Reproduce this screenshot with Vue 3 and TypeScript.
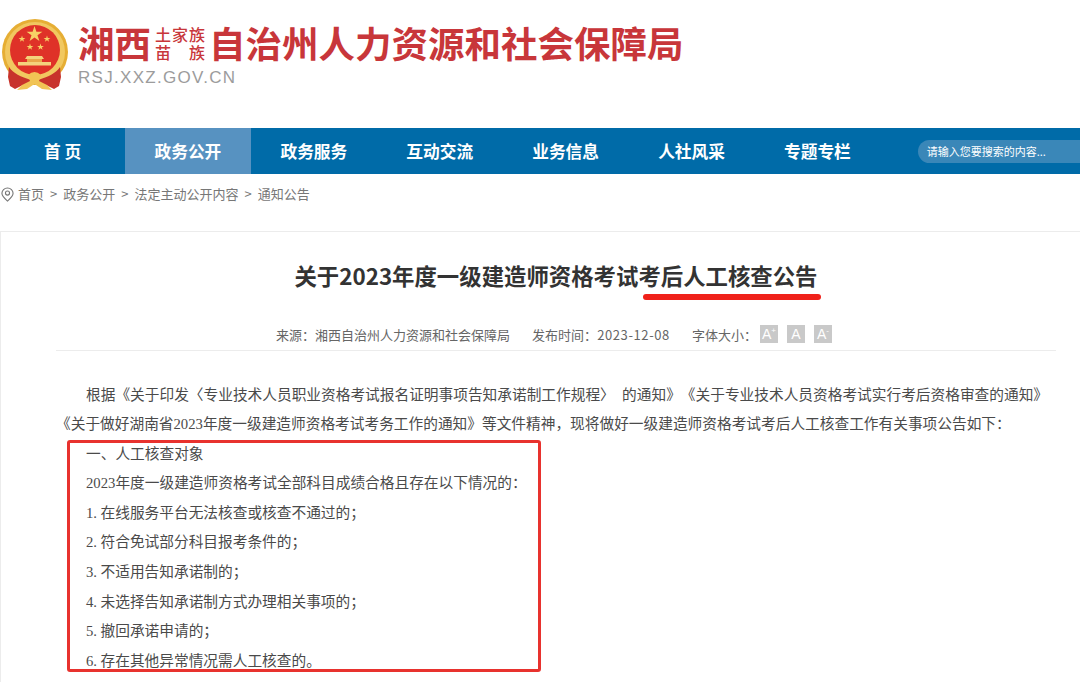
<script setup lang="ts">
const navItems = ['首 页', '政务公开', '政务服务', '互动交流', '业务信息', '人社风采', '专题专栏']
const crumbs = ['首页', '政务公开', '法定主动公开内容', '通知公告']
const fontButtons = ['+', '', '-']
const listLines = [
  { num: '', text: '一、人工核查对象' },
  { num: '', text: '2023年度一级建造师资格考试全部科目成绩合格且存在以下情况的：' },
  { num: '1.', text: '在线服务平台无法核查或核查不通过的；' },
  { num: '2.', text: '符合免试部分科目报考条件的；' },
  { num: '3.', text: '不适用告知承诺制的；' },
  { num: '4.', text: '未选择告知承诺制方式办理相关事项的；' },
  { num: '5.', text: '撤回承诺申请的；' },
  { num: '6.', text: '存在其他异常情况需人工核查的。' },
]
</script>

<template>
  <div class="page">
    <header class="masthead">
      <svg class="emblem" viewBox="0 0 68 72" width="68" height="72">
        <!-- ring -->
        <circle cx="34" cy="33" r="33" fill="#e6ae34" />
        <circle cx="34" cy="33" r="30" fill="#f1c860" />
        <circle cx="34" cy="31" r="25" fill="#df3228" />
        <!-- stars -->
        <path d="M33.500 7 l1.900 5.700 h6 l-4.900 3.500 1.900 5.700 -4.900-3.500 -4.900 3.500 1.900-5.700 -4.900-3.500 h6 z" fill="#f7d266" />
        <path d="M21 16.500 l.8 2.400 h2.600 l-2.100 1.500 .8 2.400 -2.100-1.500 -2.100 1.500 .8-2.400 -2.100-1.500 h2.600 z" fill="#f7d266" />
        <path d="M46 16.500 l.8 2.400 h2.600 l-2.100 1.500 .8 2.400 -2.100-1.500 -2.100 1.500 .8-2.400 -2.100-1.500 h2.600 z" fill="#f7d266" />
        <path d="M29 24.500 l.8 2.400 h2.600 l-2.100 1.500 .8 2.400 -2.100-1.500 -2.100 1.500 .8-2.400 -2.100-1.500 h2.600 z" fill="#f7d266" />
        <path d="M39.500 24.500 l.8 2.400 h2.600 l-2.100 1.500 .8 2.400 -2.100-1.500 -2.100 1.500 .8-2.400 -2.100-1.500 h2.600 z" fill="#f7d266" />
        <!-- gate -->
        <path d="M26 37 h15 l2 3 h-19 z" fill="#f4d27c" />
        <path d="M26 40 h15 v3 h-15 z" fill="#e9a84a" />
        <path d="M17 43 h33 v3.500 h-33 z" fill="#f4d27c" />
        <!-- ribbons -->
        <path d="M8 48 C12 54 20 58 30 61 L28 67 L22 66 L14 70 L9 67 L7 58 Z" fill="#c8332b" />
        <path d="M59 48 C55 54 47 58 37 61 L39 67 L45 66 L53 70 L58 67 L60 58 Z" fill="#c8332b" />
        <!-- bow -->
        <path d="M27 56 Q33.500 50 40 56 L38 62 L46 66 L51 71 L41 70 L33.500 65 L26 70 L16 71 L21 66 L29 62 Z" fill="#f1c455" />
      </svg>
      <div class="brand">
        <div class="brand-name">
          <span>湘西</span>
          <span class="minority">
            <i>土</i><i>家</i><i>族</i>
            <i>苗</i><i></i><i>族</i>
          </span>
          <span>自治州人力资源和社会保障局</span>
        </div>
        <div class="brand-url">RSJ.XXZ.GOV.CN</div>
      </div>
    </header>

    <nav class="nav">
      <a v-for="(item, i) in navItems" :key="item" class="nav-item" :class="{ active: i === 1 }">{{ item }}</a>
      <div class="search">请输入您要搜索的内容...</div>
    </nav>

    <div class="crumbs">
      <svg viewBox="0 0 14 16" width="13" height="15" class="pin">
        <path d="M7 1 C3.600 1 1 3.500 1 6.700 C1 10 4.500 12.800 7 15 C9.500 12.800 13 10 13 6.700 C13 3.500 10.400 1 7 1 Z" fill="none" stroke="#777" stroke-width="1.2" />
        <circle cx="7" cy="6.500" r="2.200" fill="none" stroke="#777" stroke-width="1.2" />
      </svg>
      <template v-for="(c, i) in crumbs" :key="c">
        <span v-if="i > 0" class="sep">&gt;</span>
        <span>{{ c }}</span>
      </template>
    </div>

    <main class="article">
      <h1 class="title">
        关于2023年度一级建造师资格考试<span class="marked">考后人工核查公告</span>
      </h1>
      <div class="meta">
        <span>来源：湘西自治州人力资源和社会保障局</span>
        <span>发布时间：<span class="date">2023-12-08</span></span>
        <span class="font-size">
          字体大小：
          <b v-for="b in fontButtons" :key="b" class="font-btn">A<sup v-if="b">{{ b }}</sup></b>
        </span>
      </div>
      <div class="body">
        <p class="indent">根据《关于印发〈专业技术人员职业资格考试报名证明事项告知承诺制工作规程〉&ensp;的通知》《关于专业技术人员资格考试实行考后资格审查的通知》《关于做好湖南省2023年度一级建造师资格考试考务工作的通知》等文件精神，现将做好一级建造师资格考试考后人工核查工作有关事项公告如下：</p>
        <div class="boxed">
          <p v-for="line in listLines" :key="line.text" class="indent"><span v-if="line.num" class="num">{{ line.num }}</span>{{ line.text }}</p>
        </div>
      </div>
    </main>
  </div>
</template>

<style>
html, body {
  margin: 0;
  background: #fff;
}
</style>

<style scoped>
.page {
  width: 1080px;
  height: 682px;
  overflow: hidden;
  font-family: "Noto Sans CJK SC", "Liberation Sans", sans-serif;
  color: #444;
  text-spacing-trim: space-all;
}

.masthead {
  height: 128px;
  box-sizing: border-box;
  padding: 19px 0 0 1px;
  display: flex;
  gap: 9px;
  align-items: flex-start;
}

.emblem {
  flex: none;
}

.brand {
  padding-top: 1px;
}

.brand-name {
  display: flex;
  align-items: center;
  height: 46px;
  font-size: 36.500px;
  font-weight: 700;
  color: #c8363a;
  line-height: 46px;
  white-space: nowrap;
}

.minority {
  display: grid;
  grid-template-columns: repeat(3, 17px);
  grid-auto-rows: 18px;
  font-size: 16px;
  line-height: 18px;
  font-weight: 500;
  margin: 0 3px 0 4px;
}

.minority i {
  font-style: normal;
}

.brand-url {
  font-family: "Liberation Sans", sans-serif;
  font-size: 17px;
  color: #9c9c9c;
  letter-spacing: 1.300px;
  line-height: 20px;
  margin-top: 2px;
}

.nav {
  height: 46px;
  background: #006ba8;
  display: flex;
  align-items: center;
}

.nav-item {
  width: 125.900px;
  height: 46px;
  line-height: 46px;
  text-align: center;
  color: #fff;
  font-size: 16.700px;
  font-weight: 700;
  flex: none;
}

.nav-item:first-child {
  width: 125px;
}

.nav-item.active {
  background: #5792c1;
}

.search {
  margin-left: 37.400px;
  flex: 1;
  height: 23px;
  line-height: 23px;
  padding-left: 9px;
  border-radius: 12px 0 0 12px;
  background: #3a87b8;
  color: #fff;
  font-size: 11px;
}

.crumbs {
  height: 57px;
  box-sizing: border-box;
  padding: 11px 0 0 1px;
  display: flex;
  align-items: flex-start;
  gap: 6px;
  font-size: 13px;
  line-height: 18px;
  color: #777;
}

.pin {
  margin-top: 2px;
  margin-right: -2px;
}

.article {
  min-height: 460px;
  border-top: 1px solid #ececec;
  border-left: 1px solid #ececec;
  padding: 0 24px 0 55px;
}

.title {
  margin: 0;
  padding-top: 26px;
  text-align: center;
  font-size: 22.400px;
  line-height: 34px;
  font-weight: 700;
  color: #333;
}

.marked {
  position: relative;
}

.marked::after {
  content: "";
  position: absolute;
  left: 5px;
  right: -3px;
  bottom: -8.500px;
  height: 5.500px;
  border-radius: 3px;
  background: #f0211a;
}

.meta {
  margin-top: 30px;
  height: 24px;
  display: flex;
  justify-content: center;
  align-items: center;
  gap: 22px;
  font-size: 13px;
  color: #666;
  padding: 0 4px 4px 0;
  border-bottom: 1px solid #ececec;
}

.date {
  letter-spacing: 0.600px;
}

.font-size {
  display: flex;
  align-items: center;
}

.font-btn {
  display: inline-block;
  width: 18px;
  height: 18px;
  line-height: 18px;
  margin-left: 9px;
  text-align: center;
  background: #c9c9c9;
  color: #fff;
  font-family: "Liberation Sans", sans-serif;
  font-size: 14px;
  font-weight: 400;
}

.font-btn:first-of-type {
  margin-left: 3px;
}

.font-btn sup {
  font-size: 8px;
  line-height: 0;
}

.body {
  padding-top: 29.500px;
  font-family: "Liberation Serif", "Noto Sans CJK SC", serif;
  font-size: 14.700px;
  line-height: 29.600px;
  color: #4a4a4a;
}

.body p {
  margin: 0;
}

.indent {
  text-indent: 30px;
}

.num {
  margin-right: 3.500px;
}

.boxed {
  position: relative;
}

.boxed::before {
  content: "";
  position: absolute;
  left: 11px;
  top: 0.500px;
  width: 468px;
  height: 226px;
  border: 3px solid #e8322e;
  border-radius: 3px;
  pointer-events: none;
}
</style>
